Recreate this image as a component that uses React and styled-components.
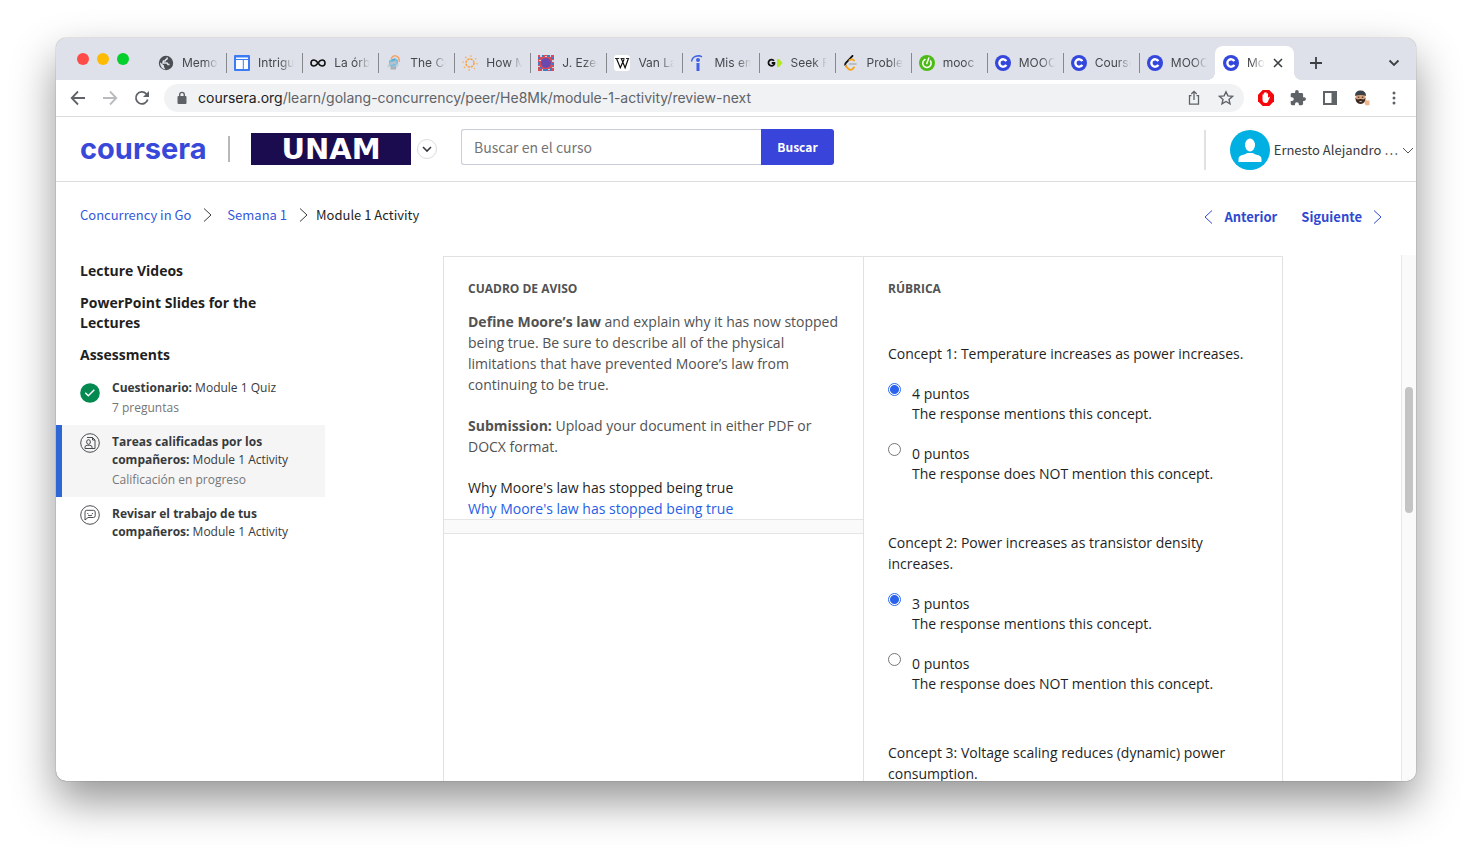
import React from "react";
import styled, { createGlobalStyle, css } from "styled-components";

const open = '"Open Sans", "Noto Sans", sans-serif';
const source = '"Noto Sans CJK SC", "Open Sans", sans-serif';
const ui = 'Inter, Roboto, sans-serif';

const Global = createGlobalStyle`
  *, *::before, *::after { box-sizing: border-box; }
  body { margin: 0; background: #fff; font-family: ${open}; font-size: 14px; line-height: 21px; color: #1f1f1f; }
  button, input { font: inherit; color: inherit; margin: 0; }
  button { padding: 0; border: 0; background: none; }
  a { text-decoration: none; color: inherit; }
  h2, h3, p, ul, ol, fieldset { margin: 0; padding: 0; border: 0; }
  ul, ol { list-style: none; }
  svg { display: block; flex: none; }
`;

const Desktop = styled.div`
  display: flex;
  height: 100vh;
  padding: 38px 56px 74px;
  overflow: hidden;
`;

const Window = styled.div`
  flex: 1;
  min-width: 0;
  display: flex;
  flex-direction: column;
  overflow: hidden;
  background: #fff;
  border-radius: 10px;
  box-shadow: 0 0 1px rgba(0, 0, 0, 0.7), 0 20px 44px rgba(0, 0, 0, 0.42);
`;

/* Tab strip */
const TabStrip = styled.div`
  display: flex;
  align-items: flex-end;
  height: 42px;
  padding: 0 12px 0 21px;
  background: #dee1e9;
`;

const Lights = styled.div`
  display: flex;
  gap: 8px;
  align-self: center;
  width: 73px;
`;

const Light = styled.button`
  width: 12px;
  height: 12px;
  border-radius: 50%;
  background: ${(p) => p.$color};
`;

const Tabs = styled.ul`
  display: flex;
  flex: 1;
  min-width: 0;
`;

const TabItem = styled.li`
  position: relative;
  flex: 1 1 0;
  min-width: 0;
  display: flex;
  align-items: center;
  gap: 8px;
  height: 34px;
  padding: 0 8px;
  font: 12px/16px ${ui};
  color: #45484c;
  ${(p) => p.$divider && css`
    &::after {
      content: "";
      position: absolute;
      right: -1px;
      top: 7px;
      width: 1px;
      height: 20px;
      background: #85888d;
    }
  `}
  ${(p) => p.$active && css`
    padding-right: 11px;
    background: #fff;
    border-radius: 8px 8px 0 0;
    &::before, &::after {
      content: "";
      position: absolute;
      bottom: 0;
      width: 8px;
      height: 8px;
    }
    &::before { left: -8px; background: radial-gradient(circle at 0 0, transparent 8px, #fff 8px); }
    &::after { right: -8px; background: radial-gradient(circle at 100% 0, transparent 8px, #fff 8px); }
  `}
`;

const TabTitle = styled.span`
  flex: 1;
  min-width: 0;
  overflow: hidden;
  white-space: nowrap;
  mask-image: linear-gradient(to right, #000 calc(100% - 14px), transparent);
`;

const StripButton = styled.button`
  display: grid;
  place-items: center;
  width: 20px;
  height: 34px;
  margin-left: ${(p) => p.$gap};
`;

/* Toolbar */
const Toolbar = styled.div`
  display: flex;
  align-items: center;
  gap: 12px;
  height: 37px;
  padding: 0 12px;
  border-bottom: 1px solid #dcdcdd;
`;

const IconButton = styled.button`
  display: grid;
  place-items: center;
  width: 20px;
  height: 20px;
`;

const Omnibox = styled.div`
  flex: 1;
  min-width: 0;
  display: flex;
  align-items: center;
  gap: 12px;
  height: 28px;
  padding: 0 8px 0 12px;
  border-radius: 14px;
  background: #f1f2f4;
`;

const Url = styled.a`
  flex: 1;
  min-width: 0;
  margin-left: -2px;
  overflow: hidden;
  white-space: nowrap;
  font: 14px/20px ${ui};
  color: #5f6368;
  b { font-weight: 400; color: #202124; }
`;

/* Course header */
const Header = styled.header`
  display: flex;
  align-items: center;
  height: 65px;
  padding: 0 2px 0 24px;
  border-bottom: 1px solid #dcdcdd;
`;

const Wordmark = styled.a`
  width: 128px;
  font: 700 29px/32px Inter, sans-serif;
  color: #3848d8;
`;

const Rule = styled.span`
  flex: none;
  width: 2px;
  height: 26px;
  margin-left: 20px;
  background: #b8b8b8;
`;

const Partner = styled.a`
  display: grid;
  place-items: center;
  width: 160px;
  height: 32px;
  margin: 0 6px 0 21px;
  background: #1b0c50;
  color: #fff;
  font: 700 29px/32px "DejaVu Sans", sans-serif;
`;

const RoundButton = styled.button`
  display: grid;
  place-items: center;
  width: 20px;
  height: 20px;
  border: 1px solid #dcdcdd;
  border-radius: 50%;
`;

const Search = styled.form`
  display: flex;
  width: 373px;
  height: 36px;
  margin: 0 auto 4px 24px;
`;

const SearchInput = styled.input`
  flex: 1;
  min-width: 0;
  padding: 0 12px;
  border: 1px solid #c9cdda;
  border-right: 0;
  border-radius: 3px 0 0 3px;
  font: 14px/20px ${source};
  &::placeholder { color: #757575; opacity: 1; }
`;

const SearchButton = styled.button`
  width: 73px;
  border-radius: 0 3px 3px 0;
  background: #3945da;
  color: #fff;
  font: 700 12px/20px ${source};
`;

const Account = styled.button`
  display: flex;
  align-items: center;
  gap: 4px;
  margin-top: 2px;
  padding-left: 24px;
  border-left: 2px solid #e1e1e1;
  font: 13px/20px ${source};
  color: #373a3c;
  white-space: nowrap;
`;

/* Breadcrumbs */
const NavBar = styled.div`
  display: flex;
  align-items: center;
  justify-content: space-between;
  height: 73px;
  padding: 0 34px 4px 24px;
`;

const Crumbs = styled.ol`
  display: flex;
  align-items: center;
  margin-bottom: 3px;
  font: 13px/20px ${source};
  color: #1f1f1f;
  a { color: #3357dd; }
  li { display: flex; align-items: center; }
`;

const CrumbArrow = styled.span`
  margin: 0 ${(p) => p.$after || "15px"} 0 12px;
`;

const Pager = styled.nav`
  display: flex;
  gap: 24px;
  font: 700 13px/20px ${source};
  color: #2f49d1;
  a { display: flex; align-items: center; gap: 11px; }
`;

/* Course body */
const Body = styled.div`
  flex: 1;
  min-height: 0;
  display: flex;
  overflow: hidden;
`;

const Sidebar = styled.aside`
  flex: none;
  width: 269px;
  padding-top: 6px;
`;

const Section = styled.h3`
  margin: 0 48px 12px 24px;
  font-size: 14px;
  line-height: 20px;
  font-weight: 700;
  color: #1f1f1f;
`;

const Steps = styled.ul`
  margin-top: -6px;
`;

const Step = styled.a`
  display: flex;
  gap: 12px;
  padding: 8px 24px 8px ${(p) => (p.$active ? "18px" : "24px")};
  border-left: ${(p) => (p.$active ? "6px solid #2d67d6" : "0")};
  background: ${(p) => (p.$active ? "#f5f5f5" : "transparent")};
  font-size: 12px;
  line-height: 18px;
  color: #373a3c;
  svg { margin-top: ${(p) => (p.$done ? "4px" : "0")}; }
  small { display: block; margin-top: 2px; font-size: 12px; color: #757575; }
`;

const Main = styled.main`
  flex: 1;
  min-width: 0;
  overflow: hidden;
  padding-top: 1px;
`;

const Panel = styled.div`
  display: grid;
  grid-template-columns: 1fr 1fr;
  max-width: 840px;
  margin: 0 auto;
  border: 1px solid #e1e1e1;
`;

const PromptBody = styled.div`
  display: grid;
  gap: 20px;
  padding: 22px 24px 0;
  border-bottom: 1px solid #e5e5e5;
  color: #525252;
`;

const Band = styled.div`
  height: 14px;
  background: #fafafa;
  border-bottom: 1px solid #e5e5e5;
`;

const Caption = styled.h2`
  font-size: 12px;
  line-height: 20px;
  font-weight: 700;
  color: #525252;
`;

const Lead = styled.p`
  margin-top: -8px;
`;

const Submission = styled.p`
  color: #1f1f1f;
  a { color: #2560e6; }
`;

const Rubric = styled.section`
  padding: 22px 24px 0;
  border-left: 1px solid #e1e1e1;
`;

const Criterion = styled.fieldset`
  min-width: 0;
  margin: ${(p) => (p.$first ? "44px" : "48px")} 0 0;
`;

const Legend = styled.legend`
  padding: 0;
`;

const Option = styled.label`
  display: flex;
  gap: 11px;
  margin-top: 20px;
  line-height: 20px;
  span { display: block; }
`;

const Radio = styled.input`
  appearance: none;
  flex: none;
  width: 13px;
  height: 13px;
  margin-top: -1px;
  border: 1px solid #767676;
  border-radius: 50%;
  background: #fff;
  &:checked {
    border-color: #2a6df0;
    background: radial-gradient(circle, #2a62ee 4px, #fff 5px);
  }
`;

const ScrollTrack = styled.div`
  flex: none;
  width: 15px;
  padding: 132px 3px 0;
  border-left: 1px solid #e8e8e8;
  background: #fafafa;
`;

const Thumb = styled.div`
  width: 8px;
  height: 126px;
  border-radius: 4px;
  background: #c4c4c4;
`;

const Fav = ({ children }) => (
  <svg width="16" height="16" viewBox="0 0 16 16" aria-hidden="true">{children}</svg>
);

const CourseraFav = () => (
  <Fav>
    <circle cx="8" cy="8" r="8" fill="#3447dd" />
    <path d="M11.300 9.800A3.700 3.700 0 1 1 11.300 6.200" fill="none" stroke="#fff" strokeWidth="2.400" />
  </Fav>
);

const GlobeFav = () => (
  <Fav>
    <circle cx="8" cy="8" r="7.200" fill="#4b4f54" />
    <path d="M9 2.500q.5 1.500-1 2L7 6H5.500L5 8h4l1 1.500h1.500" fill="none" stroke="#dee1e9" strokeWidth="1.600" />
    <path d="M2.300 7.500 6 10.500V12l1.500 2.500Q2.500 13.500 2 8z" fill="#dee1e9" />
  </Fav>
);

const LayoutFav = () => (
  <Fav>
    <rect width="16" height="16" rx="1" fill="#3b7cf5" />
    <path d="M2 2.500h12V4H2zM2 5h6.800v9H2zM9.800 5H14v9H9.800z" fill="#fff" />
  </Fav>
);

const InfinityFav = () => (
  <Fav>
    <path d="M8 8C6.600 6 5.600 5 4 5a3 3 0 0 0 0 6c1.600 0 2.600-1 4-3s2.400-3 4-3a3 3 0 0 1 0 6c-1.600 0-2.600-1-4-3z" fill="none" stroke="#111" strokeWidth="1.600" />
  </Fav>
);

const RobotFav = () => (
  <Fav>
    <path d="M5 4q2-4 5-3 4 1 3 6" fill="none" stroke="#f2a66c" strokeWidth="1.500" />
    <path d="M3 5.500 9 3l3 2v5l-7 2-2-2z" fill="#79bfe0" />
    <path d="M3.500 7.500 10 6l.5 2.500L4 10z" fill="#b9c2ca" />
    <path d="M4.500 11.500 10.500 11 10 14.500H4.500z" fill="#a9b1b8" />
    <path d="M1.500 10l2-1v3.500h-2zM10.500 9l2-1v3.500h-2z" fill="#c9ced3" />
    <path d="M5.500 4.500 9 3.500V5l-3.500 1z" fill="#55a8d5" />
  </Fav>
);

const SunFav = () => (
  <Fav>
    <circle cx="8" cy="8" r="4" fill="none" stroke="#f5a140" strokeWidth="1.500" strokeDasharray="2.200 .94" />
    <circle cx="8" cy="8" r="7" fill="none" stroke="#f5b266" strokeWidth="1.500" strokeDasharray="1.500 4" />
  </Fav>
);

const MosaicFav = () => (
  <Fav>
    <rect width="16" height="16" fill="#d84b57" />
    <path d="M0 2h2v2H0zM4 0h2v2H4zM9 0h2v2H9zM13 2h3v2h-3zM0 7h2v3H0zM14 8h2v2h-2zM2 12h2v2H2zM6 14h3v2H6zM12 13h2v3h-2zM3 4h2v2H3z" fill="#4279c2" />
    <path d="M2 0h2v2H2zM7 1h2v1H7zM12 0h1v2h-1zM1 5h2v1H1zM14 5h2v2h-2zM0 11h2v1H0zM4 14h1v2H4zM10 14h2v1h-2zM14 12h2v1h-2z" fill="#c7d7e8" />
    <circle cx="8" cy="8" r="5" fill="#6a49ae" />
  </Fav>
);

const WikiFav = () => (
  <Fav>
    <rect width="16" height="16" rx="3" fill="#fff" />
    <path d="M1 3.500h4.200M6.500 3.500h4M12 3.500h3.200" stroke="#111" strokeWidth=".9" />
    <path d="m2.600 3.700 3.700 9 3.800-8.500M7.400 3.700l3.700 9 3.200-9" fill="none" stroke="#111" strokeWidth="1.200" />
  </Fav>
);

const InfoFav = () => (
  <Fav>
    <path d="M1.500 6.500Q2.500 1 8.500.8q2 0 3.500 1.200" fill="none" stroke="#4261e6" strokeWidth="1.400" />
    <circle cx="8" cy="5" r="2" fill="#4261e6" />
    <path d="M6.500 8h3v8h-3z" fill="#4261e6" />
  </Fav>
);

const SeekFav = () => (
  <Fav>
    <path d="M7 5.800A3.100 3.100 0 1 0 7.400 9V8H4.700" fill="none" stroke="#111" strokeWidth="1.800" />
    <path d="M10 4h2l3.500 4-3.500 4h-2z" fill="#b2ea1b" />
  </Fav>
);

const CodeFav = () => (
  <Fav>
    <path d="M9.500.9 2.500 8.400q-.8 1.200.3 2.400" fill="none" stroke="#111" strokeWidth="1.800" strokeLinecap="round" />
    <path d="M2.800 10.800 5.500 14q2 1.700 4 0l1.500-1.700M6.500 5.200Q9 3.500 11 5.500" fill="none" stroke="#f8a51b" strokeWidth="1.800" strokeLinecap="round" />
    <path d="M6.500 9h6.500" stroke="#b0b3b7" strokeWidth="1.600" strokeLinecap="round" />
  </Fav>
);

const PowerFav = () => (
  <Fav>
    <circle cx="8" cy="8" r="8" fill="#4cbb17" />
    <path d="M6 4.500A4.200 4.200 0 1 0 11.500 6M7.800 8.500 9.800 3" fill="none" stroke="#fff" strokeWidth="1.500" strokeLinecap="round" />
  </Fav>
);

const Stroke = ({ d, size = 16, box = "0 0 16 16", color = "#5f6368", width = 1.8 }) => (
  <svg width={size} height={size} viewBox={box} fill="none" stroke={color} strokeWidth={width} aria-hidden="true">
    <path d={d} />
  </svg>
);

const Caret = ({ d, color, w = 9, h = 16 }) => (
  <svg width={w} height={h} viewBox={`0 0 ${w} ${h}`} fill="none" stroke={color} strokeWidth="1" aria-hidden="true">
    <path d={d} />
  </svg>
);

const RIGHT = "M1 1.500 8 8l-7 6.500";
const LEFT = "M8 1.500 1 8l7 6.500";

const tabs = [
  ["Memorias de", GlobeFav],
  ["Intriguing", LayoutFav],
  ["La órbita de", InfinityFav],
  ["The Coding", RobotFav],
  ["How Many", SunFav],
  ["J. Ezequiel", MosaicFav],
  ["Van Laar", WikiFav],
  ["Mis empleos", InfoFav],
  ["Seek Reach", SeekFav],
  ["Problems", CodeFav],
  ["mooc unam", PowerFav],
  ["MOOC List", CourseraFav],
  ["Coursera", CourseraFav],
  ["MOOC List", CourseraFav],
];

const criteria = [
  { title: "Concept 1: Temperature increases as power increases.", points: 4 },
  { title: "Concept 2: Power increases as transistor density increases.", points: 3 },
  { title: "Concept 3: Voltage scaling reduces (dynamic) power consumption.", points: 3 },
];

const BrowserChrome = () => (
  <>
    <TabStrip>
      <Lights>
        <Light $color="#ff4b47" aria-label="Cerrar" />
        <Light $color="#fdbc02" aria-label="Minimizar" />
        <Light $color="#05cf2c" aria-label="Maximizar" />
      </Lights>
      <Tabs>
        {tabs.map(([title, Icon], i) => (
          <TabItem key={i} $divider={i < tabs.length - 1}>
            <Icon />
            <TabTitle>{title}</TabTitle>
          </TabItem>
        ))}
        <TabItem $active>
          <CourseraFav />
          <TabTitle>Module</TabTitle>
          <button aria-label="Cerrar pestaña">
            <Stroke d="m1 1 8 8m0-8-8 8" size={10} box="0 0 10 10" color="#3c4043" width={1.6} />
          </button>
        </TabItem>
      </Tabs>
      <StripButton $gap="12px" aria-label="Nueva pestaña">
        <Stroke d="M6 0v12M0 6h12" size={12} box="0 0 12 12" color="#3c4043" />
      </StripButton>
      <StripButton $gap="58px" aria-label="Buscar pestañas">
        <Stroke d="m3.500 5.500 4.500 4.500 4.500-4.500" color="#3c4043" />
      </StripButton>
    </TabStrip>
    <Toolbar>
      <IconButton aria-label="Atrás"><Stroke d="M15 8H2M8 1.500 1.700 8 8 14.500" /></IconButton>
      <IconButton aria-label="Adelante"><Stroke d="M1 8h13M8 1.500 14.300 8 8 14.500" color="#b9bbbe" /></IconButton>
      <IconButton aria-label="Recargar">
        <svg width="16" height="16" viewBox="0 0 16 16" aria-hidden="true">
          <path d="M13.700 9.500A6 6 0 1 1 12.300 3.800L14 5.500" fill="none" stroke="#5f6368" strokeWidth="1.800" />
          <path d="M15 1v6H9z" fill="#5f6368" />
        </svg>
      </IconButton>
      <Omnibox>
        <svg width="12" height="14" viewBox="0 0 12 14" aria-hidden="true">
          <rect x="1.500" y="5" width="9" height="8" rx="1" fill="#5f6368" />
          <path d="M3.700 5.500V3.700a2.300 2.300 0 0 1 4.600 0v1.800" fill="none" stroke="#5f6368" strokeWidth="1.400" />
        </svg>
        <Url href="#"><b>coursera.org</b>/learn/golang-concurrency/peer/He8Mk/module-1-activity/review-next</Url>
        <IconButton aria-label="Compartir">
          <Stroke d="M5.500 5.700h-2v8.500h9V5.700h-2M8 10V1.500M5.300 4 8 1.300 10.700 4" width={1.3} />
        </IconButton>
        <IconButton aria-label="Favoritos">
          <Stroke d="m8 1.800 1.900 4.100 4.500.5-3.400 3 1 4.400L8 11.500l-4 2.300 1-4.400-3.400-3 4.500-.5z" width={1.4} />
        </IconButton>
      </Omnibox>
      <IconButton aria-label="Bloqueador">
        <svg width="16" height="16" viewBox="0 0 16 16" aria-hidden="true">
          <path d="M4.700 0h6.600L16 4.700v6.600L11.300 16H4.700L0 11.300V4.700z" fill="#f4060c" />
          <path d="M4.500 8V5q0-.7.600-.7t.7.700V3.300q0-.7.700-.7t.7.700v-.6q0-.7.700-.7t.7.700V4q0-.7.700-.7t.7.700v4l.8-1q.7-.6 1.200 0l-2 4.500Q9.300 13 8 13q-3.500 0-3.500-3.500z" fill="#fff" />
        </svg>
      </IconButton>
      <IconButton aria-label="Extensiones">
        <svg width="16" height="16" viewBox="1 1 22 22" aria-hidden="true">
          <path fill="#5f6368" d="M20.500 11H19V7a2 2 0 0 0-2-2h-4V3.500a2.500 2.500 0 0 0-5 0V5H4a2 2 0 0 0-2 2v3.800h1.500a2.700 2.700 0 0 1 0 5.400H2V20a2 2 0 0 0 2 2h3.800v-1.500a2.700 2.700 0 0 1 5.400 0V22H17a2 2 0 0 0 2-2v-4h1.500a2.500 2.500 0 0 0 0-5z" />
        </svg>
      </IconButton>
      <IconButton aria-label="Panel lateral">
        <svg width="14" height="14" viewBox="0 0 14 14" aria-hidden="true">
          <path fillRule="evenodd" fill="#5f6368" d="M0 0h14v14H0zM2 2v10h6.500V2z" />
        </svg>
      </IconButton>
      <IconButton aria-label="Perfil">
        <svg width="16" height="16" viewBox="0 0 16 16" aria-hidden="true">
          <circle cx="6.500" cy="8" r="5" fill="#dca27a" />
          <path d="M1.500 7.500q1 2.300 3 1.800 2-.8 4 0 2 .5 3-1.800.3 6.500-5 6.500t-5-6.500z" fill="#3a2821" />
          <path d="M4.800 11h3.600q-1.700 1.500-3.600 0z" fill="#fff" />
          <path d="M1 6q0-5.500 5.500-5.500T12 6Q6.500 4 1 6z" fill="#3b4146" />
          <path d="M3.800 7.200h1.500m2.500 0h1.500" stroke="#222" />
          <path d="m11.500 8.500 1.300 2h2.700v4.500q-5 1.500-5-2z" fill="#efb58c" />
        </svg>
      </IconButton>
      <IconButton aria-label="Menú">
        <svg width="4" height="14" viewBox="0 0 4 14" fill="#5f6368" aria-hidden="true">
          <circle cx="2" cy="2" r="1.500" /><circle cx="2" cy="7" r="1.500" /><circle cx="2" cy="12" r="1.500" />
        </svg>
      </IconButton>
    </Toolbar>
  </>
);

const CourseHeader = () => (
  <Header>
    <Wordmark href="#">coursera</Wordmark>
    <Rule />
    <Partner href="#">UNAM</Partner>
    <RoundButton aria-label="Más opciones">
      <Stroke d="m1 3 4 4 4-4" size={10} box="0 0 10 10" color="#373a3c" width={1.6} />
    </RoundButton>
    <Search onSubmit={(e) => e.preventDefault()}>
      <SearchInput type="search" placeholder="Buscar en el curso" aria-label="Buscar en el curso" />
      <SearchButton type="submit">Buscar</SearchButton>
    </Search>
    <Account>
      <svg width="40" height="40" viewBox="0 0 40 40" aria-hidden="true">
        <circle cx="20" cy="20" r="20" fill="#00b0e2" />
        <ellipse cx="20" cy="15" rx="5" ry="6.500" fill="#fff" />
        <path d="M8.500 32v-3q0-3.500 5-4.300Q16 24 17 23h6q1 1 3.500 1.700 5 .8 5 4.300v3z" fill="#fff" />
      </svg>
      Ernesto Alejandro …
      <Caret d="m1 2 5 5 5-5" color="#525252" w={12} h={9} />
    </Account>
  </Header>
);

const CheckIcon = () => (
  <svg width="20" height="20" viewBox="0 0 20 20" aria-hidden="true">
    <circle cx="10" cy="10" r="9.800" fill="#048a51" />
    <path d="m5.300 9.800 3 3 6-6" fill="none" stroke="#fff" strokeWidth="1.500" />
  </svg>
);

const PeerIcon = () => (
  <svg width="20" height="20" viewBox="0 0 20 20" fill="none" stroke="#373a3c" strokeWidth=".9" aria-hidden="true">
    <circle cx="10" cy="10" r="9.300" />
    <path d="M7 4.500h5.500L15 7v8.500H5M12.500 4.500V7H15" />
    <ellipse cx="8.500" cy="9" rx="1.900" ry="2.300" />
    <path d="M5 15.500V14q0-1.500 2.300-1.700h2.500q2.200.2 2.200 1.700v1.500" />
  </svg>
);

const ReviewIcon = () => (
  <svg width="20" height="20" viewBox="0 0 20 20" fill="none" stroke="#373a3c" strokeWidth=".9" aria-hidden="true">
    <circle cx="10" cy="10" r="9.300" />
    <path d="M5 15V7q0-1.700 1.700-1.700h6.800q1.700 0 1.700 1.700v3.800q0 1.700-1.700 1.700H8z" />
    <path d="M7.800 8v1M12.400 8v1M8 10.200q2 1 4.200 0" />
  </svg>
);

export default function App() {
  return (
    <>
      <Global />
      <Desktop>
        <Window>
          <BrowserChrome />
          <CourseHeader />
          <NavBar>
            <Crumbs>
              <li><a href="#">Concurrency in Go</a><CrumbArrow><Caret d={RIGHT} color="#373a3c" /></CrumbArrow></li>
              <li><a href="#">Semana 1</a><CrumbArrow $after="8px"><Caret d={RIGHT} color="#373a3c" /></CrumbArrow></li>
              <li aria-current="page">Module 1 Activity</li>
            </Crumbs>
            <Pager>
              <a href="#"><Caret d={LEFT} color="#2f49d1" />Anterior</a>
              <a href="#">Siguiente<Caret d={RIGHT} color="#2f49d1" /></a>
            </Pager>
          </NavBar>
          <Body>
            <Sidebar>
              <Section>Lecture Videos</Section>
              <Section>PowerPoint Slides for the Lectures</Section>
              <Section>Assessments</Section>
              <Steps>
                <li><Step href="#" $done><CheckIcon /><span><b>Cuestionario:</b> Module 1 Quiz<small>7 preguntas</small></span></Step></li>
                <li><Step href="#" $active><PeerIcon /><span><b>Tareas calificadas por los compañeros:</b> Module 1 Activity<small>Calificación en progreso</small></span></Step></li>
                <li><Step href="#"><ReviewIcon /><span><b>Revisar el trabajo de tus compañeros:</b> Module 1 Activity</span></Step></li>
              </Steps>
            </Sidebar>
            <Main>
              <Panel>
                <section>
                  <PromptBody>
                    <Caption>CUADRO DE AVISO</Caption>
                    <Lead><b>Define Moore’s law</b> and explain why it has now stopped being true. Be sure to describe all of the physical limitations that have prevented Moore’s law from continuing to be true.</Lead>
                    <p><b>Submission:</b> Upload your document in either PDF or DOCX format.</p>
                    <Submission>Why Moore's law has stopped being true<br /><a href="#">Why Moore's law has stopped being true</a></Submission>
                  </PromptBody>
                  <Band />
                </section>
                <Rubric>
                  <Caption>RÚBRICA</Caption>
                  {criteria.map((c, i) => (
                    <Criterion key={c.title} $first={i === 0}>
                      <Legend>{c.title}</Legend>
                      <Option>
                        <Radio type="radio" name={`concept-${i}`} defaultChecked />
                        <span>{c.points} puntos<span>The response mentions this concept.</span></span>
                      </Option>
                      <Option>
                        <Radio type="radio" name={`concept-${i}`} />
                        <span>0 puntos<span>The response does NOT mention this concept.</span></span>
                      </Option>
                    </Criterion>
                  ))}
                </Rubric>
              </Panel>
            </Main>
            <ScrollTrack><Thumb /></ScrollTrack>
          </Body>
        </Window>
      </Desktop>
    </>
  );
}
